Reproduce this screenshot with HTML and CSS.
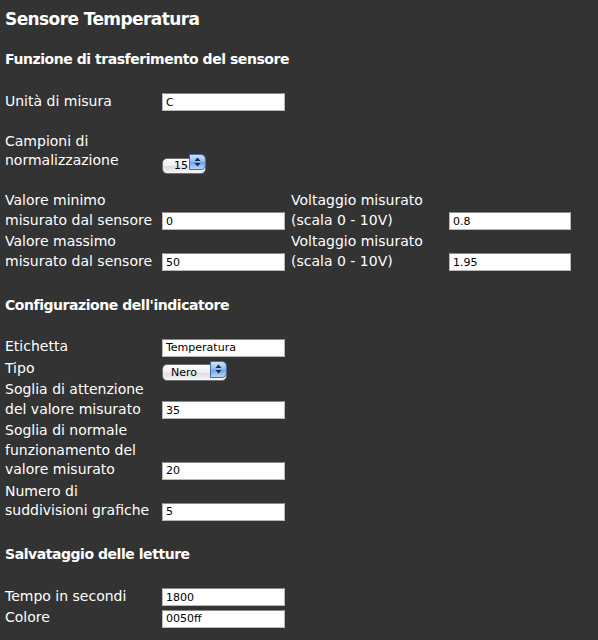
FILE: index.html
```html
<!DOCTYPE html>
<html lang="it">
<head>
    <meta charset="UTF-8">
    <title>Sensore Temperatura</title>
    <link rel="stylesheet" href="styles.css">
</head>
<body>
    <div class="pagina">
        <h1>Sensore Temperatura</h1>

        <h2>Funzione di trasferimento del sensore</h2>
        <div class="gruppo">
            <div class="riga">
                <label for="unita">Unità di misura</label>
                <input type="text" id="unita" value="C">
            </div>
        </div>
        <div class="gruppo">
            <div class="riga">
                <label for="campioni">Campioni di<br>normalizzazione</label>
                <span class="tendina corta">
                    <select id="campioni"><option>15</option></select>
                    <span class="frecce"><svg width="7" height="10" viewBox="0 0 7 10"><path d="M3.5 0.5 L6.5 4 L0.5 4 Z M0.5 6 L6.5 6 L3.5 9.5 Z" fill="#1a2a44"/></svg></span>
                </span>
            </div>
        </div>
        <div class="gruppo">
            <div class="riga">
                <label for="minimo">Valore minimo<br>misurato dal sensore</label>
                <input type="text" id="minimo" value="0">
                <label for="vmin" class="secondo">Voltaggio misurato<br>(scala 0 - 10V)</label>
                <input type="text" id="vmin" value="0.8">
            </div>
            <div class="riga">
                <label for="massimo">Valore massimo<br>misurato dal sensore</label>
                <input type="text" id="massimo" value="50">
                <label for="vmax" class="secondo">Voltaggio misurato<br>(scala 0 - 10V)</label>
                <input type="text" id="vmax" value="1.95">
            </div>
        </div>

        <h2>Configurazione dell'indicatore</h2>
        <div class="gruppo">
            <div class="riga">
                <label for="etichetta">Etichetta</label>
                <input type="text" id="etichetta" value="Temperatura">
            </div>
            <div class="riga">
                <label for="tipo">Tipo</label>
                <span class="tendina">
                    <select id="tipo"><option>Nero</option></select>
                    <span class="frecce"><svg width="7" height="10" viewBox="0 0 7 10"><path d="M3.5 0.5 L6.5 4 L0.5 4 Z M0.5 6 L6.5 6 L3.5 9.5 Z" fill="#1a2a44"/></svg></span>
                </span>
            </div>
            <div class="riga">
                <label for="attenzione">Soglia di attenzione<br>del valore misurato</label>
                <input type="text" id="attenzione" value="35">
            </div>
            <div class="riga">
                <label for="normale">Soglia di normale<br>funzionamento del<br>valore misurato</label>
                <input type="text" id="normale" value="20">
            </div>
            <div class="riga">
                <label for="suddivisioni">Numero di<br>suddivisioni grafiche</label>
                <input type="text" id="suddivisioni" value="5">
            </div>
        </div>

        <h2>Salvataggio delle letture</h2>
        <div class="gruppo">
            <div class="riga">
                <label for="tempo">Tempo in secondi</label>
                <input type="text" id="tempo" value="1800">
            </div>
            <div class="riga">
                <label for="colore">Colore</label>
                <input type="text" id="colore" value="0050ff">
            </div>
        </div>
    </div>
</body>
</html>
```

FILE: styles.css
```css
* {
    margin: 0;
    padding: 0;
    box-sizing: border-box;
}
body {
    background: #333333;
    color: #ffffff;
    font-family: "DejaVu Sans", Verdana, sans-serif;
}
.pagina {
    padding: 8px 5px 10px 5px;
}
h1 {
    font-size: 17px;
    line-height: 22px;
    letter-spacing: -0.6px;
    font-weight: bold;
}
h2 {
    font-size: 14px;
    line-height: 19px;
    letter-spacing: -0.45px;
    font-weight: bold;
    margin-top: 20px;
    margin-bottom: 22.5px;
}
.gruppo {
    display: flex;
    flex-direction: column;
    gap: 2px;
}
.gruppo + .gruppo {
    margin-top: 20.5px;
}
.gruppo + h2 {
    margin-top: 24.5px;
}
.riga {
    display: flex;
    align-items: flex-end;
}
label {
    width: 157px;
    flex: none;
    font-size: 14px;
    line-height: 19.5px;
    white-space: nowrap;
}
label.secondo {
    width: 158px;
    margin-left: 6px;
}
input[type="text"] {
    width: 123px;
    height: 18px;
    flex: none;
    border: 1px solid #b8b8b8;
    border-top-color: #8a8a8a;
    background: #fff;
    color: #000;
    font-family: "DejaVu Sans", Verdana, sans-serif;
    font-size: 11px;
    padding: 0 3px;
}
.secondo + input[type="text"] {
    width: 122px;
}
.tendina {
    position: relative;
    display: inline-block;
    flex: none;
    width: 65px;
    height: 17px;
    margin-bottom: 0.5px;
}
.tendina.corta {
    width: 44px;
    height: 16px;
}
.tendina select {
    appearance: none;
    -webkit-appearance: none;
    width: 100%;
    height: 100%;
    border: 1px solid #6f6f6f;
    border-radius: 5px;
    background: linear-gradient(#ffffff, #eeeeee 50%, #dcdcdc 51%, #f6f6f6);
    color: #000;
    font-family: "DejaVu Sans", Verdana, sans-serif;
    font-size: 11px;
    padding: 0 0 0 8px;
}
.tendina.corta select {
    padding-left: 11px;
}
.frecce {
    position: absolute;
    top: 0;
    right: 0;
    width: 17px;
    height: 100%;
    border: 1px solid #4a6a9a;
    border-radius: 0 5px 5px 0;
    background: linear-gradient(#cfe3fb, #8db8ee 50%, #6aa0e6 51%, #b4d6fa);
    display: flex;
    align-items: center;
    justify-content: center;
}
```
